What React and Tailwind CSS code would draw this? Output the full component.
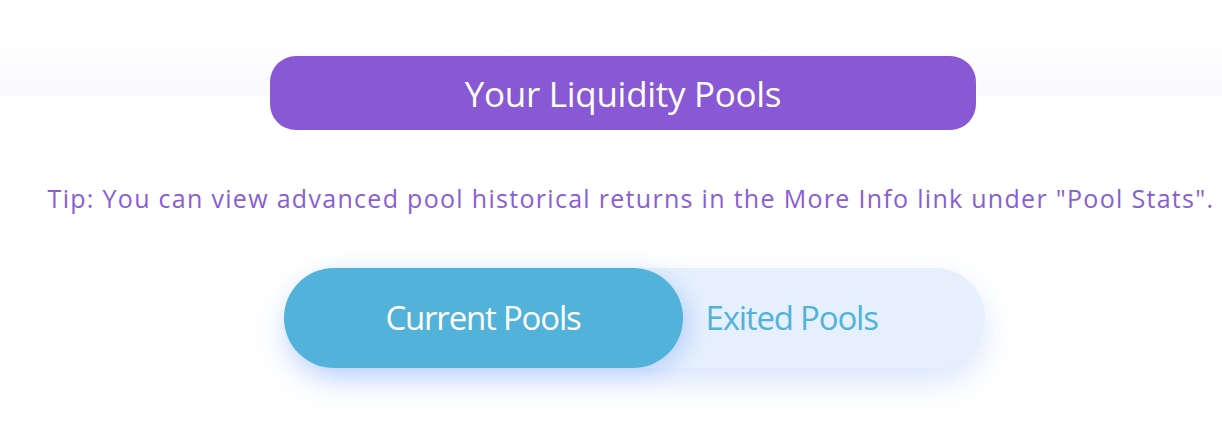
export default function App() {
    return (
        <div className="w-[1222px] h-[432px] bg-white relative overflow-hidden" style={{ fontFamily: '"Open Sans", "Noto Sans", sans-serif' }}>
            <div className="absolute left-0 right-0 top-[40px] h-[56px] bg-gradient-to-b from-white to-[#f9f8fe]" />
            <div className="relative flex flex-col items-center pt-[56px]">
                <div className="ml-[24px] w-[706px] h-[74px] rounded-[26px] bg-[#8858d5] flex items-center justify-center">
                    <h1 className="text-white text-[35px] tracking-[-0.3px] leading-none">Your Liquidity Pools</h1>
                </div>
                <p className="mt-[56px] ml-[40px] whitespace-nowrap text-[#8a5cd8] text-[25px] leading-none tracking-[1.3px]">
                    Tip: You can view advanced pool historical returns in the More Info link under "Pool Stats".
                </p>
                <div className="mt-[57px] ml-[46px] w-[701px] h-[100px] rounded-full bg-[#e6f0fd] flex items-center shadow-[0_14px_32px_rgba(80,140,245,0.22)]">
                    <button className="w-[399px] h-[100px] rounded-full bg-[#52b2da] text-white text-[33px] tracking-[-1.2px] shadow-[8px_6px_20px_rgba(80,140,245,0.25)]">
                        Current Pools
                    </button>
                    <button className="ml-[23px] text-[#52b2da] text-[33px] tracking-[-1.2px]">
                        Exited Pools
                    </button>
                </div>
            </div>
        </div>
    );
}
